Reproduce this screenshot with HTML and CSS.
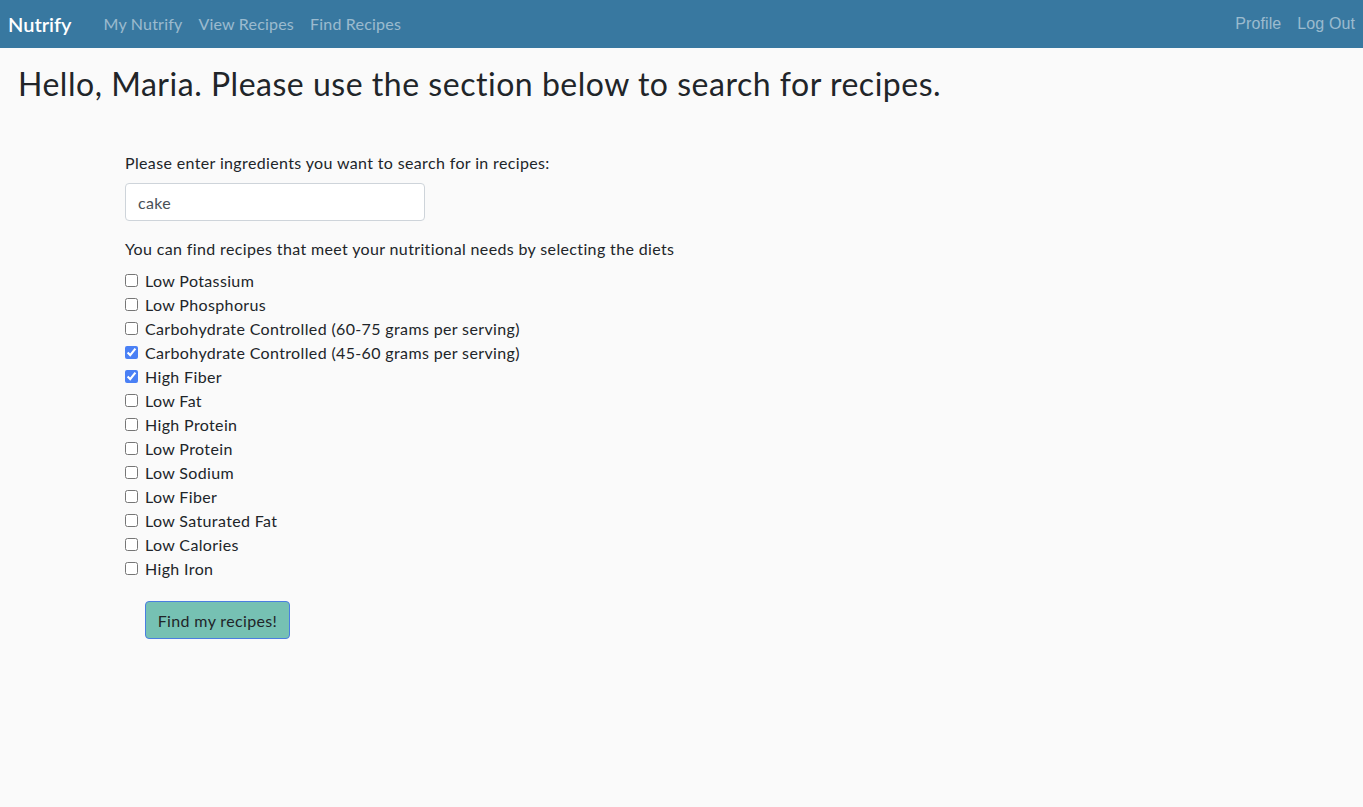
FILE: index.html
```html
<!DOCTYPE html>
<html>
<head>
<meta charset="utf-8">
<link rel="stylesheet" href="styles.css">
</head>
<body>
<nav class="navbar">
  <div class="nav-left">
    <a class="brand" href="#">Nutrify</a>
    <a class="nav-link" href="#">My Nutrify</a>
    <a class="nav-link" href="#">View Recipes</a>
    <a class="nav-link" href="#">Find Recipes</a>
  </div>
  <div class="nav-right">
    <a class="nav-link alt" href="#">Profile</a>
    <a class="nav-link alt last" href="#">Log Out</a>
  </div>
</nav>
<main class="page">
  <h1 class="greeting">Hello, Maria. Please use the section below to search for recipes.</h1>
  <form class="search-form">
    <label class="prompt" for="ing">Please enter ingredients you want to search for in recipes:</label>
    <input id="ing" class="text-input" type="text" value="cake">
    <p class="prompt diets-prompt">You can find recipes that meet your nutritional needs by selecting the diets</p>
    <div class="diets">
      <label class="diet"><input type="checkbox"><span>Low Potassium</span></label>
      <label class="diet"><input type="checkbox"><span>Low Phosphorus</span></label>
      <label class="diet"><input type="checkbox"><span>Carbohydrate Controlled (60-75 grams per serving)</span></label>
      <label class="diet"><input type="checkbox" checked><span>Carbohydrate Controlled (45-60 grams per serving)</span></label>
      <label class="diet"><input type="checkbox" checked><span>High Fiber</span></label>
      <label class="diet"><input type="checkbox"><span>Low Fat</span></label>
      <label class="diet"><input type="checkbox"><span>High Protein</span></label>
      <label class="diet"><input type="checkbox"><span>Low Protein</span></label>
      <label class="diet"><input type="checkbox"><span>Low Sodium</span></label>
      <label class="diet"><input type="checkbox"><span>Low Fiber</span></label>
      <label class="diet"><input type="checkbox"><span>Low Saturated Fat</span></label>
      <label class="diet"><input type="checkbox"><span>Low Calories</span></label>
      <label class="diet"><input type="checkbox"><span>High Iron</span></label>
    </div>
    <button class="submit" type="button">Find my recipes!</button>
  </form>
</main>
</body>
</html>
```
FILE: styles.css
```css
* { box-sizing: border-box; }
html, body { margin: 0; padding: 0; }
body {
  background: #fafafa;
  font-family: "Lato", "Noto Sans", sans-serif;
  color: #212529;
  height: 807px;
  letter-spacing: 0.36px;
}
.navbar {
  height: 48px;
  background: #3878a0;
  display: flex;
  justify-content: space-between;
  align-items: center;
  padding: 0 0 1px 8px;
}
.nav-left, .nav-right { display: flex; align-items: center; }
.brand {
  color: #fff;
  font-size: 20px;
  text-decoration: none;
  margin-right: 24px;
  font-weight: 600;
  letter-spacing: 0;
}
.nav-link {
  color: rgba(255,255,255,0.5);
  text-decoration: none;
  font-size: 16px;
  padding: 0 8px;
  letter-spacing: 0.2px;
}
.nav-link.alt { font-family: "Liberation Sans", Arial, sans-serif; letter-spacing: 0.1px; }
.nav-link.last { padding-right: 8px; }
.page { padding: 0 18px; }
.greeting {
  font-weight: 400;
  font-size: 32px;
  margin: 17px 0 0;
  line-height: 38px;
  letter-spacing: 0.52px;
}
.search-form {
  display: flex;
  flex-direction: column;
  align-items: flex-start;
  padding: 48px 0 0 107px;
}
.prompt { font-size: 16px; line-height: 24px; margin: 0; }
.text-input {
  margin-top: 8px;
  width: 300px;
  height: 38px;
  border: 1px solid #ced4da;
  border-radius: 4px;
  background: #fff;
  font: inherit;
  font-size: 16px;
  padding: 0 12px;
  color: #495057;
  letter-spacing: 0.36px;
}
.diets-prompt { margin-top: 16px; }
.diets { display: flex; flex-direction: column; margin-top: 7px; }
.diet {
  display: flex;
  align-items: center;
  height: 24px;
  font-size: 16px;
}
.diet input {
  margin: 0 7px 0 0;
  width: 13px;
  height: 13px;
  accent-color: #4a80f5;
}
.submit {
  margin: 21px 0 0 20px;
  width: 145px;
  height: 38px;
  background: #76c1b3;
  border: 1px solid #4a7ee0;
  border-radius: 4px;
  font: inherit;
  font-size: 16px;
  color: #212529;
  letter-spacing: 0.36px;
}
```
